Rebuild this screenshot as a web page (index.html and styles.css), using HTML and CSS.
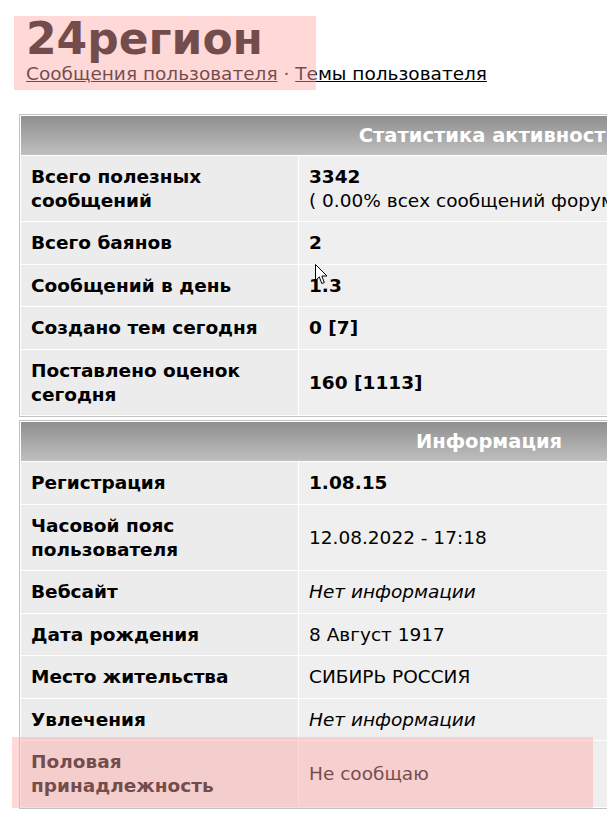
FILE: index.html
```html
<!DOCTYPE html>
<html lang="ru">
<head>
<meta charset="utf-8">
<title>24регион</title>
<link rel="stylesheet" href="styles.css">
</head>
<body>
<div class="page">
  <header class="top">
    <h1 class="logo">24регион</h1>
    <nav class="userlinks">
      <a href="#">Сообщения пользователя</a> · <a href="#">Темы пользователя</a>
    </nav>
  </header>

  <table class="block">
    <tr><th colspan="2">Статистика активности</th></tr>
    <tr><td class="k">Всего полезных сообщений</td><td class="v"><b>3342</b><br>( 0.00% всех сообщений форума )</td></tr>
    <tr><td class="k">Всего баянов</td><td class="v"><b>2</b></td></tr>
    <tr><td class="k">Сообщений в день</td><td class="v"><b>1.3</b></td></tr>
    <tr><td class="k">Создано тем сегодня</td><td class="v"><b>0 [7]</b></td></tr>
    <tr><td class="k">Поставлено оценок сегодня</td><td class="v"><b>160 [1113]</b></td></tr>
  </table>

  <table class="block">
    <tr><th colspan="2">Информация</th></tr>
    <tr><td class="k">Регистрация</td><td class="v"><b>1.08.15</b></td></tr>
    <tr><td class="k">Часовой пояс пользователя</td><td class="v">12.08.2022 - 17:18</td></tr>
    <tr><td class="k">Вебсайт</td><td class="v"><i>Нет информации</i></td></tr>
    <tr><td class="k">Дата рождения</td><td class="v">8 Август 1917</td></tr>
    <tr><td class="k">Место жительства</td><td class="v">СИБИРЬ РОССИЯ</td></tr>
    <tr><td class="k">Увлечения</td><td class="v"><i>Нет информации</i></td></tr>
    <tr><td class="k">Половая принадлежность</td><td class="v">Не сообщаю</td></tr>
  </table>

  <div class="mark mark-top"></div>
  <div class="mark mark-bottom"></div>
  <svg class="cursor" width="13" height="21" viewBox="0 0 13 21" aria-hidden="true">
    <path d="M0.5 0.5 L0.5 16.5 L4.3 12.9 L6.8 19.5 L9.3 18.5 L6.8 12 L12 12 Z" fill="#fff" stroke="#000" stroke-width="1" stroke-linejoin="round"/>
  </svg>
</div>
</body>
</html>
```

FILE: styles.css
```css
html, body {
  margin: 0;
  padding: 0;
  background: #fff;
}
body {
  font-family: "DejaVu Sans", Verdana, sans-serif;
  color: #000;
  overflow: hidden;
}
.page {
  position: relative;
  width: 607px;
  height: 822px;
  overflow: hidden;
}
.top {
  padding: 15px 0 0 26px;
}
.logo {
  margin: 0;
  font-size: 44px;
  line-height: 47px;
  font-weight: bold;
  color: #000;
}
.userlinks {
  font-size: 18.5px;
  line-height: 24px;
  color: #000;
}
.userlinks a {
  color: #000;
  text-decoration: underline;
}
.block {
  margin: 0 0 3px 19px;
  width: 940px;
  border: 1px solid #c2c2c2;
  border-spacing: 1px;
  background: #fff;
  font-size: 18.5px;
  line-height: 24px;
}
.block:first-of-type {
  margin-top: 28px;
}
.block th {
  height: 39px;
  padding: 0;
  background: linear-gradient(#8f8f8f, #bfbfbf);
  color: #fff;
  font-size: 19.5px;
  font-weight: bold;
  text-align: center;
}
.block td {
  padding: 8.8px 10px 8.7px 10px;
  vertical-align: middle;
}
.block td.k {
  width: 257px;
  background: #ececec;
  font-weight: bold;
}
.block td.v {
  background: #efefef;
}
.mark {
  position: absolute;
  background: rgba(255, 168, 168, 0.45);
  pointer-events: none;
}
.mark-top {
  left: 14px;
  top: 16px;
  width: 302px;
  height: 74px;
}
.mark-bottom {
  left: 12px;
  top: 737px;
  width: 581px;
  height: 71px;
}
.cursor {
  position: absolute;
  left: 315px;
  top: 264px;
}
```
